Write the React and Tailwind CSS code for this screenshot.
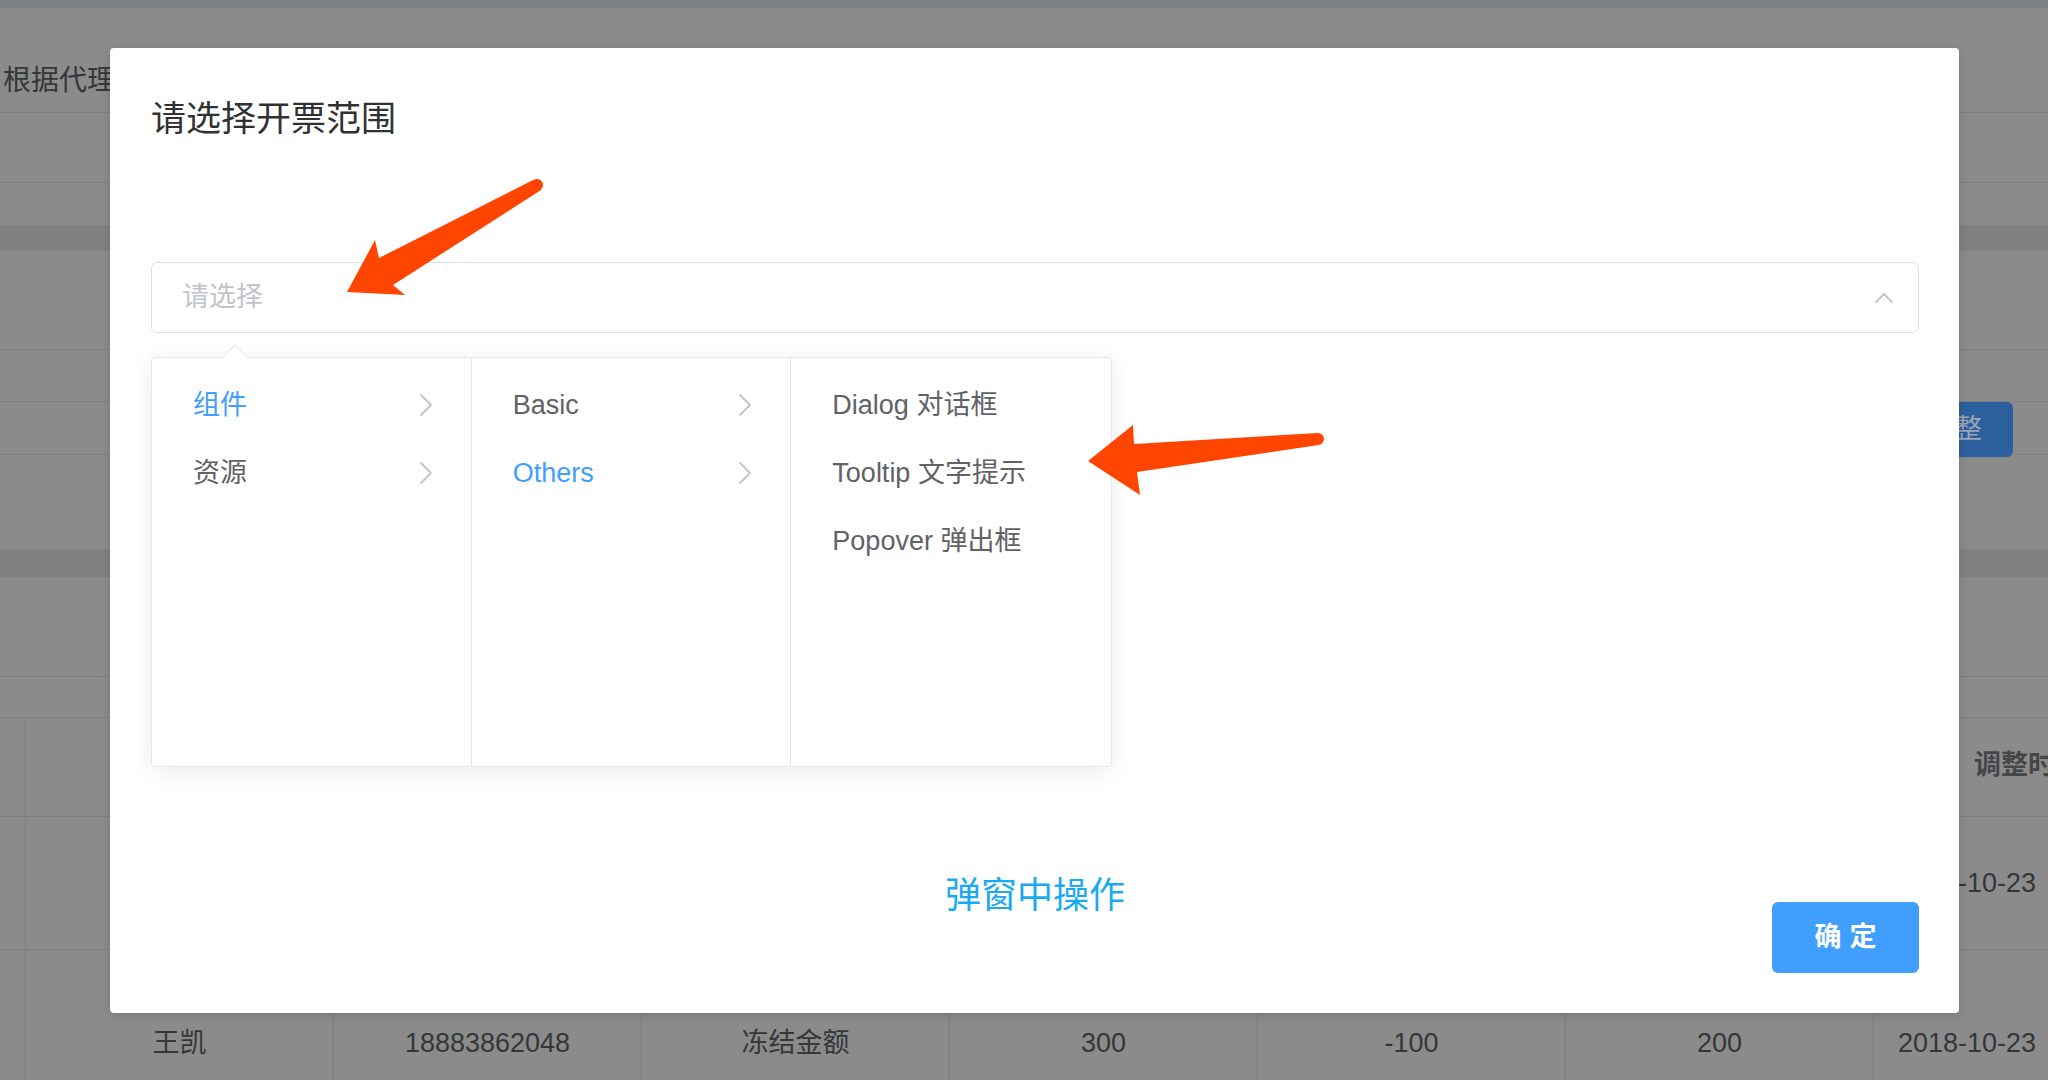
import React from 'react';

const font = { fontFamily: '"Liberation Sans", "Noto Sans CJK SC", sans-serif' };

const levels = [
    [
        { label: '组件', active: true, more: true },
        { label: '资源', more: true },
    ],
    [
        { label: 'Basic', more: true },
        { label: 'Others', active: true, more: true },
    ],
    [
        { label: 'Dialog 对话框' },
        { label: 'Tooltip 文字提示' },
        { label: 'Popover 弹出框' },
    ],
];

const tableRow = ['王凯', '18883862048', '冻结金额', '300', '-100', '200'];

function ChevronRight() {
    return (
        <svg width="14" height="24" viewBox="0 0 14 24" fill="none">
            <path d="M2 2 L12 12 L2 22" stroke="#c0c4cc" strokeWidth="1.8" strokeLinecap="round" strokeLinejoin="round" />
        </svg>
    );
}

function ChevronUp() {
    return (
        <svg width="20" height="12" viewBox="0 0 20 12" fill="none">
            <path d="M2 10 L10 2 L18 10" stroke="#c0c4cc" strokeWidth="1.8" strokeLinecap="round" strokeLinejoin="round" />
        </svg>
    );
}

// background page, seen through the dark mask
function BackPage() {
    return (
        <div className="flex flex-col w-full h-full text-[#353638]">
            <div className="h-[8px] bg-[#7e7f81]"></div>
            <div className="h-[105px] border-b border-[#7e7f80] flex items-center pl-[3px] pt-[42px] text-[28px] whitespace-nowrap">
                根据代理商名称查询
            </div>
            <div className="h-[70px] border-b border-[#7e7f80]"></div>
            <div className="h-[42px]"></div>
            <div className="h-[26px] bg-[#808183]"></div>
            <div className="h-[99px] border-b border-[#7e7f80]"></div>
            <div className="h-[52px] border-b border-[#7e7f80]"></div>
            <div className="h-[53px] border-b border-[#7e7f80] flex justify-end pr-[35px]">
                <div className="h-[55px] -mb-[2px] px-[31px] bg-[#2c5f9e] rounded-[6px] flex items-center text-[27px] text-[#9aa6b6]">
                    余额调整
                </div>
            </div>
            <div className="h-[94px]"></div>
            <div className="h-[28px] bg-[#808183]"></div>
            <div className="h-[100px] border-b border-[#7e7f80]"></div>
            <div className="h-[41px] border-b border-[#7e7f80]"></div>
            {/* table */}
            <div className="flex h-[99px] border-b border-[#7e7f80]">
                <div className="w-[26px] shrink-0 border-r border-[#7e7f80]"></div>
                <div className="flex-1"></div>
                <div className="w-[174px] shrink-0 flex items-center pl-[100px] text-[27px] font-bold text-[#454648] pb-[4px] whitespace-nowrap">调整时间</div>
            </div>
            <div className="flex h-[133px] border-b border-[#7e7f80]">
                <div className="w-[26px] shrink-0 border-r border-[#7e7f80]"></div>
                <div className="flex-1"></div>
                <div className="w-[174px] shrink-0 flex items-center pl-[24px] text-[27px] whitespace-nowrap">2018-10-23</div>
            </div>
            <div className="flex flex-1">
                <div className="w-[26px] shrink-0 border-r border-[#7e7f80]"></div>
                {tableRow.map((t, i) => (
                    <div key={i} className="w-[308px] shrink-0 border-r border-[#7e7f80] text-center text-[27px] pt-[73px]">{t}</div>
                ))}
                <div className="shrink-0 pl-[24px] text-[27px] pt-[73px] whitespace-nowrap">2018-10-23</div>
            </div>
        </div>
    );
}

function Arrows() {
    return (
        <svg className="absolute inset-0 pointer-events-none" width="2048" height="1080" viewBox="0 0 2048 1080">
            <g fill="#ff4500">
                <polygon points="533,180 379,258 375,240 347,292 405,295 393,285 541,190" />
                <circle cx="537" cy="185" r="6" />
                <polygon points="1318,433 1134,444 1133,425 1088,461 1140,495 1137,472 1319,445" />
                <circle cx="1318" cy="439" r="6" />
            </g>
        </svg>
    );
}

export default function App() {
    return (
        <div className="relative w-[2048px] h-[1080px] overflow-hidden bg-[#8b8b8b]" style={font}>
            <BackPage />

            {/* dialog */}
            <div className="absolute left-[110px] top-[48px] w-[1849px] h-[965px] bg-white rounded-[4px] shadow-[0_2px_10px_rgba(0,0,0,0.15)] pl-[41px] pr-[40px] flex flex-col">
                <div className="pt-[52px] text-[35px] leading-[38px] text-[#303133]">请选择开票范围</div>

                <div className="mt-[124px] h-[71px] border border-[#dcdfe6] rounded-[6px] flex items-center justify-between pl-[30px] pr-[24px]">
                    <span className="text-[27px] text-[#c0c4cc]">请选择</span>
                    <ChevronUp />
                </div>

                {/* cascader panel */}
                <div className="relative mt-[24px] w-[961px] h-[410px] bg-white border border-[#e4e7ed] rounded-[4px] shadow-[0_4px_24px_rgba(0,0,0,0.08)] flex">
                    <div className="absolute left-[74px] -top-[10px] w-[18px] h-[18px] bg-white border-l border-t border-[#e4e7ed] rotate-45"></div>
                    {levels.map((col, ci) => (
                        <div key={ci} className={`relative w-[320px] h-full pt-[13px] ${ci < 2 ? 'border-r border-[#e4e7ed]' : ''}`}>
                            {col.map((item) => (
                                <div key={item.label} className="h-[68px] flex items-center justify-between pl-[41px] pr-[38px]">
                                    <span className={`text-[27px] ${item.active ? 'text-[#409eff]' : 'text-[#606266]'}`}>{item.label}</span>
                                    {item.more && <ChevronRight />}
                                </div>
                            ))}
                        </div>
                    ))}
                </div>

                <div className="mt-[111px] flex items-start">
                    <div className="flex-1"></div>
                    <div className="text-[36px] leading-[36px] text-[#1aaaf2]">弹窗中操作</div>
                    <div className="flex-1 flex justify-end pt-[24px]">
                        <button className="w-[147px] h-[71px] bg-[#409eff] rounded-[6px] text-white text-[27px] font-bold tracking-[8px] pl-[8px]">
                            确定
                        </button>
                    </div>
                </div>
            </div>

            <Arrows />
        </div>
    );
}
